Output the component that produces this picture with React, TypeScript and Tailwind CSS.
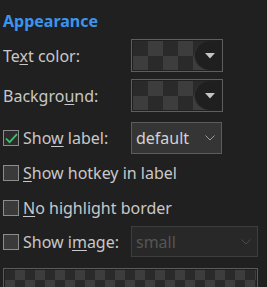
import React from 'react';

const checker15 =
  'bg-[repeating-conic-gradient(#3d3d3d_0%_25%,#2a2a2a_0%_50%)] bg-[length:30px_30px]';
const checker10 =
  'bg-[repeating-conic-gradient(#3d3d3d_0%_25%,#2a2a2a_0%_50%)] bg-[length:20px_20px]';

function ColorButton() {
  return (
    <div className="relative w-[92px] h-[33px] border border-[#5e5e5e] p-px">
      <div className={`w-full h-full ${checker15}`} />
      <div className="absolute top-px bottom-px right-px w-[27px] rounded-l-[60%_50%] bg-[#1f1f1f] border-l border-[#333333] flex items-center justify-center">
        <svg width="10" height="6" viewBox="0 0 10 6" className="ml-[3px]">
          <path d="M0 0 H10 L5 5.5 Z" fill="#c4c4c4" />
        </svg>
      </div>
    </div>
  );
}

function Checkbox({ checked }: { checked?: boolean }) {
  return (
    <div
      className={`w-[16px] h-[16px] shrink-0 border border-[#8c8c8c] flex items-center justify-center ${
        checked ? 'bg-[#2c2c2c]' : 'bg-[#3a3a3a]'
      }`}
    >
      {checked && (
        <svg width="13" height="11" viewBox="0 0 13 11">
          <path d="M1 5.5 L4.6 9.2 L12 1.2" fill="none" stroke="#3ec46d" strokeWidth="1.7" />
        </svg>
      )}
    </div>
  );
}

function Select({ value, disabled, width }: { value: string; disabled?: boolean; width: string }) {
  return (
    <div
      className={`${width} h-full flex items-center justify-between pl-[4px] pr-[6px] border ${
        disabled ? 'bg-[#282828] border-[#3e3e3e] text-[#555555]' : 'bg-[#353535] border-[#5c5c5c] text-[#d2d2d2]'
      }`}
    >
      <span>{value}</span>
      <svg width="10" height="6" viewBox="0 0 10 6">
        <path d="M0.5 0.5 L5 5 L9.5 0.5" fill="none" stroke={disabled ? '#4a4a4a' : '#9a9a9a'} strokeWidth="1" />
      </svg>
    </div>
  );
}

export default function App() {
  return (
    <div
      className="w-[267px] h-[287px] overflow-hidden bg-[#202020] px-[3px] text-[16px] text-[#c8c8c8]"
      style={{ fontFamily: '"Noto Sans", "Open Sans", sans-serif' }}
    >
      {/* Header */}
      <div className="h-[39px] pt-[9px] leading-[24px] text-[16px] font-bold text-[#3a95ee]">Appearance</div>

      {/* Color pickers */}
      <div className="flex items-center h-[33px]">
        <div className="w-[128px]">
          Te<span className="underline underline-offset-2">x</span>t color:
        </div>
        <ColorButton />
      </div>
      <div className="flex items-center h-[33px] mt-[7px]">
        <div className="w-[128px]">
          Backgro<span className="underline underline-offset-2">u</span>nd:
        </div>
        <ColorButton />
      </div>

      {/* Label options */}
      <div className="flex items-center h-[32px] mt-[10px]">
        <div className="w-[128px] flex items-center gap-[4px]">
          <Checkbox checked />
          <span>
            Sho<span className="underline underline-offset-2">w</span> label:
          </span>
        </div>
        <Select value="default" width="w-[91px]" />
      </div>
      <div className="flex items-center h-[38px] gap-[4px]">
        <Checkbox />
        <span>
          <span className="underline underline-offset-2">S</span>how hotkey in label
        </span>
      </div>
      <div className="flex items-center h-[31px] gap-[4px]">
        <Checkbox />
        <span>
          <span className="underline underline-offset-2">N</span>o highlight border
        </span>
      </div>
      <div className="flex items-center h-[31px] mt-[3px]">
        <div className="w-[128px] flex items-center gap-[4px]">
          <Checkbox />
          <span>
            Show i<span className="underline underline-offset-2">m</span>age:
          </span>
        </div>
        <Select value="small" disabled width="w-[127px]" />
      </div>

      {/* Image preview */}
      <div className="mt-[11px] w-[255px] h-[40px] border border-[#5a5a5a] p-px">
        <div className={`w-full h-full ${checker10}`} />
      </div>
    </div>
  );
}
